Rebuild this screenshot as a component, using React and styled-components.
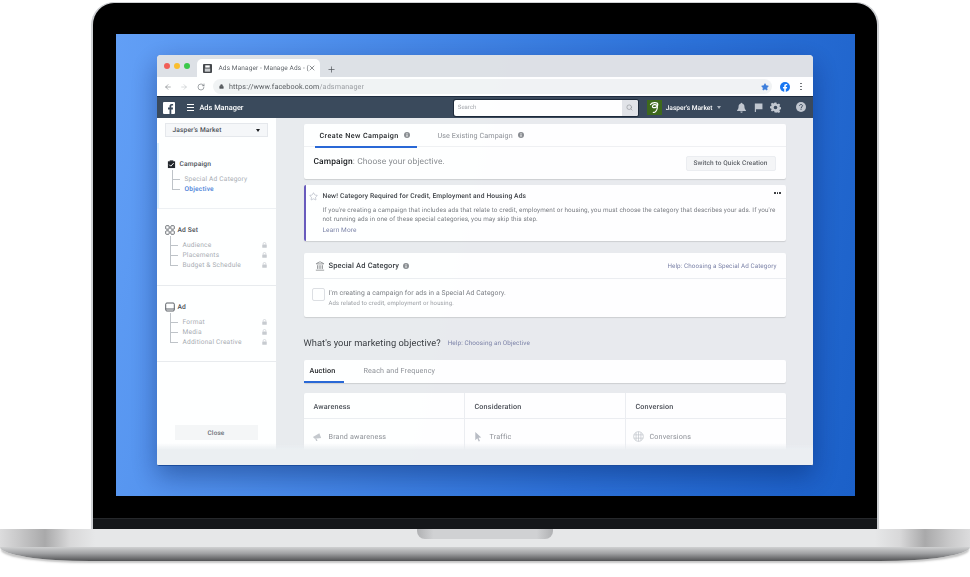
import React from 'react';
import styled, { createGlobalStyle } from 'styled-components';
import { ArrowLeft, ArrowRight, RotateCw, Lock, Star, X, Plus, Search, Landmark } from 'lucide-react';

const Global = createGlobalStyle`
  html, body { margin: 0; padding: 0; background: #fff; }
  body { width: 970px; height: 577px; overflow: hidden; font-family: Roboto, "Liberation Sans", Arial, sans-serif; text-rendering: geometricPrecision; }
  * { box-sizing: border-box; }
`;

const Page = styled.div`
  width: 970px; height: 577px; padding-top: 2px; background: #fff; display: flex; flex-direction: column; align-items: center;
`;
const Lid = styled.div`
  width: 788px; height: 527px; flex: none; display: flex; flex-direction: column; align-items: center;
  background: #000; border: solid #cfd1d4; border-width: 1px 2px 0; border-radius: 23px 23px 0 0; padding-top: 31px;
`;
const Screen = styled.div`
  width: 739px; height: 462px; flex: none; padding: 21px 0 0 41px;
  background: linear-gradient(103deg, #629ff6 0%, #4a8be9 30%, #2e73da 65%, #1b60c8 100%);
`;
const Hinge = styled.div`
  width: 100%; height: 11px; margin-top: 22px; background: #15171a; border-top: 1px solid #26282b;
`;
const Base = styled.div`
  width: 970px; height: 32px; flex: none; display: flex; flex-direction: column; align-items: center;
  border-radius: 0 0 90px 90px / 0 0 14px 14px; overflow: hidden;
  box-shadow: 0 3px 2px -1px rgba(90,90,90,.35);
`;
const BaseTop = styled.div`
  width: 100%; height: 18px; flex: none; display: flex; justify-content: center;
  background: linear-gradient(90deg, #dcdcdd 0, #c9c9ca 18px, #a9a9aa 45px, #d8d8d9 70px, #e6e7e8 95px, #e6e7e8 875px, #d8d8d9 900px, #a9a9aa 925px, #c9c9ca 950px, #dcdcdd 970px);
`;
const Notch = styled.div`
  width: 136px; height: 10px; border-radius: 0 0 8px 8px;
  background: linear-gradient(90deg, #b0b1b3, #d0d1d3 12%, #d0d1d3 88%, #b0b1b3);
`;
const BaseEdge = styled.div`
  width: 100%; flex: 1; background: linear-gradient(180deg, #cfd0d1 0%, #a2a3a5 45%, #515254 100%);
`;

const Window = styled.div`
  position: relative; width: 656px; height: 411px; border-radius: 4px 4px 2px 2px; overflow: hidden; display: flex; flex-direction: column;
  box-shadow: 0 10px 26px rgba(5,30,90,.42); background: #e9ebee; border-bottom: 1px solid #1c4d9e;
  filter: blur(.35px); opacity: .999; will-change: opacity;
`;
const TabStrip = styled.div`
  height: 22px; flex: none; background: #dee1e6; display: flex; align-items: flex-end; padding-left: 7px;
`;
const Dots = styled.div`
  display: flex; gap: 4px; align-self: flex-start; margin-top: 8px; width: 33px;
`;
const Dot = styled.span`
  width: 6px; height: 6px; border-radius: 50%; background: ${p => p.$c};
`;
const BrowserTab = styled.div`
  width: 123px; height: 18px; background: #fff; border-radius: 5px 5px 0 0; display: flex; align-items: center; padding: 0 4px 0 6px; gap: 4px;
  color: #5f6368;
`;
const Favicon = styled.span`
  width: 9px; height: 9px; flex: none; display: flex;
`;
const TabClose = styled.span`
  width: 8px; height: 8px; flex: none; display: flex;
`;
const TabTitle = styled.span`
  flex: 1; min-width: 0; padding-left: 3px; font-size: 6.5px; white-space: nowrap; color: #5f6368; letter-spacing: .12px;
`;
const NewTab = styled.span`
  margin: 0 0 3px 7px; display: flex; color: #4a4d52;
`;
const AddressRow = styled.div`
  height: 19px; flex: none; background: #fff; display: flex; align-items: center; padding: 0 8px 0 7px; color: #7b7f85;
`;
const Nav = styled.span`
  display: flex; width: 16.5px; color: ${p => p.$c || '#6a6e73'};
`;
const Omnibox = styled.div`
  width: 559px; height: 15px; background: #f1f3f4; border-radius: 8px; display: flex; align-items: center; padding: 0 3px 0 6px; gap: 5px; color: #55585c;
`;
const Url = styled.span`
  flex: 1; font-size: 7.2px; color: #9a9da1; letter-spacing: .15px;
  b { font-weight: 400; color: #55585c; }
`;
const FbRound = styled.span`
  margin-left: 8px; width: 10px; height: 10px; display: flex;
`;
const Kebab = styled.span`
  margin-left: 10px; display: flex; flex-direction: column; gap: 1.5px;
  i { width: 1.5px; height: 1.5px; border-radius: 50%; background: #5f6368; display: block; }
`;
const TopBar = styled.div`
  height: 22px; flex: none; background: #3b4a5c; border-top: 1px solid #1f2c3f; display: flex; align-items: center; padding: 0 6px;
`;
const FbLogo = styled.span`
  width: 12px; height: 12px; flex: none; display: flex;
`;
const Burger = styled.span`
  margin-left: 12px; width: 8px; display: flex; flex-direction: column; gap: 2px;
  i { height: 1px; background: #fff; display: block; }
`;
const Brand = styled.span`
  margin-left: 5px; color: #fff; font-size: 7.4px; font-weight: 500; width: 256px; white-space: nowrap;
`;
const SearchBox = styled.div`
  width: 185px; height: 16px; background: #fff; border-radius: 2px; display: flex; align-items: center; overflow: hidden; box-shadow: 0 0 0 1px #1e2a3a;
`;
const SearchText = styled.span`
  flex: 1; padding-left: 4px; font-size: 6px; color: #a5a8ad;
`;
const SearchBtn = styled.span`
  width: 16px; height: 100%; background: #e2e4e8; color: #8a8d91; display: flex; align-items: center; justify-content: center;
`;
const Avatar = styled.span`
  margin-left: 9px; width: 15px; height: 15px; display: flex; background: #3f6a1c;
`;
const AcctName = styled.span`
  margin-left: 4px; color: #fff; font-size: 6.6px; font-weight: 500; white-space: nowrap; width: 47px;
`;
const Caret = styled.span`
  width: 0; height: 0; border: solid transparent; border-width: 3px 2.5px 0; border-top-color: ${p => p.$c || '#aeb6c0'}; margin-left: ${p => p.$ml || 0}px;
`;
const BarIcon = styled.span`
  display: flex; margin-left: ${p => p.$ml}px; width: 11px; height: 11px; color: #c2c8d0;
`;
const Body = styled.div`
  flex: 1; display: flex; min-height: 0;
`;
const Sidebar = styled.aside`
  width: 119px; flex: none; background: #fff; display: flex; flex-direction: column;
`;
const AcctWrap = styled.div`
  height: 25px; flex: none; padding: 5px 8px 0;
`;
const AcctSelect = styled.div`
  height: 14px; background: #f6f7f9; border: 1px solid #e6e8ec; display: flex; align-items: center; justify-content: space-between; padding: 0 7px; color: #4b4f56; font-size: 6.6px; font-weight: 500; letter-spacing: .15px;
`;
const Section = styled.section`
  height: ${p => p.$h}px; flex: none; padding: 16px 0 0 ${p => p.$indent ? 10 : 8}px; border-bottom: 1px solid #e9ebee;
  ${p => p.$active && 'box-shadow: inset 2px 0 0 #dff1fe; border-bottom-color:#eef0f3;'}
`;
const SectionHead = styled.div`
  height: 10px; display: flex; align-items: center; gap: 3px; font-size: 6.7px; font-weight: 500; color: #4b4f56; letter-spacing: .15px;
`;
const HeadIcon = styled.span`
  width: 10px; height: 10px; display: flex; flex: none;
`;
const Tree = styled.div`
  margin: 1px 0 0 5px; padding-right: 9px;
`;
const Stem = styled.div`
  width: 1px; height: 4px; background: #bfc3c8;
`;
const TreeItem = styled.div`
  height: 10px; display: flex; align-items: center; font-size: 6.6px; letter-spacing: .2px; white-space: nowrap;
  color: ${p => p.$on ? '#4a80d8' : '#a9adb3'}; font-weight: ${p => p.$on ? 500 : 400};
`;
const Branch = styled.span`
  align-self: stretch; width: 10px; flex: none; margin-right: 3px;
  background:
    linear-gradient(#bfc3c8, #bfc3c8) left center / 8px 1px no-repeat,
    linear-gradient(#bfc3c8, #bfc3c8) left top / 1px ${p => p.$last ? '50%' : '100%'} no-repeat;
`;
const TreeLabel = styled.span`
  flex: 1;
`;
const LockMark = styled.span`
  display: flex; color: #c8cbd0;
`;
const CloseWrap = styled.div`
  margin-top: auto; padding: 0 18px 25px;
`;
const CloseBtn = styled.div`
  height: 15px; background: #f5f6f7; display: flex; align-items: center; justify-content: center; font-size: 6.4px; font-weight: 500; color: #6b6f76; letter-spacing: .15px;
`;
const Main = styled.main`
  flex: 1; min-width: 0; padding: 6px 27px 0 28px; overflow: hidden;
`;
const Card = styled.div`
  background: #fff; border-radius: 2px; box-shadow: 0 1px 1px rgba(0,0,0,.12); margin-top: ${p => p.$mt || 0}px; ${p => p.$h && `height:${p.$h}px;`}
`;
const TabsRow = styled.div`
  height: 23px; border-bottom: 1px solid #f0f1f3; display: flex; padding-left: 11px; gap: 16px;
`;
const CampaignTab = styled.div`
  width: ${p => p.$w}px; display: flex; align-items: center; gap: 5px; padding-left: 5px; font-size: 7.2px; white-space: nowrap;
  letter-spacing: ${p => p.$on ? '.4px' : '.08px'};
  font-weight: ${p => p.$on ? 500 : 400}; color: ${p => p.$on ? '#1c1e21' : '#8d9096'};
  border-bottom: 2px solid ${p => p.$on ? '#2a68d6' : 'transparent'}; height: 24px;
`;
const InfoMark = styled.span`
  display: flex; width: 6px; height: 6px; flex: none;
`;
const ObjectiveRow = styled.div`
  height: 32px; display: flex; align-items: center; justify-content: space-between; padding: 0 10px;
`;
const Objective = styled.span`
  margin-bottom: 3px; font-size: 8.4px; color: #8a8d91; letter-spacing: .15px; b { color: #1c1e21; font-weight: 500; }
`;
const QuickBtn = styled.span`
  width: 90px; height: 15px; background: #f5f6f7; border: 1px solid #eceef1; border-radius: 2px; display: flex; align-items: center; justify-content: center; font-size: 6.5px; font-weight: 500; color: #5f6368; letter-spacing: .12px;
`;
const Notice = styled(Card)`
  height: 56px; border-left: 2px solid #6a5bbd; padding: 7px 5px 0 3px; display: flex; gap: 5px;
`;
const NoticeBody = styled.div`
  flex: 1; min-width: 0;
`;
const NoticeHead = styled.div`
  display: flex; justify-content: space-between; font-size: 6.7px; font-weight: 500; color: #3d4045; line-height: 8px; letter-spacing: .14px;
`;
const More = styled.span`
  display: flex; gap: 1px;
  i { width: 1.5px; height: 1.5px; border-radius: 50%; background: #1c1e21; display: block; }
`;
const NoticeText = styled.p`
  margin: 6px 0 0; font-size: 6.35px; line-height: 8.5px; color: #7a7d82; white-space: nowrap; letter-spacing: .11px;
`;
const LearnMore = styled.a`
  display: block; margin-top: 3px; font-size: 6.5px; line-height: 9px; color: #7d84a8; letter-spacing: .12px;
`;
const CategoryHead = styled.div`
  height: 26px; border-bottom: 1px solid #eceef1; display: flex; align-items: center; padding: 0 9px 0 11px; gap: 4px; font-size: 7.5px; font-weight: 500; color: #3d4045; letter-spacing: .15px;
`;
const HelpLink = styled.a`
  font-size: ${p => p.$s || 6.3}px; font-weight: 400; color: #7d84a8; letter-spacing: .1px; ${p => p.$right && 'margin-left:auto;'} ${p => p.$ml && `margin-left:${p.$ml}px;`}
`;
const CheckRow = styled.div`
  display: flex; padding: 9px 8px 0; gap: 4px;
`;
const CheckBox = styled.span`
  width: 13px; height: 13px; flex: none; border: 1px solid #dddfe3; border-radius: 2px; background: #fff;
`;
const CheckTitle = styled.div`
  font-size: 6.8px; color: #7a7d82; line-height: 9px; margin-top: 1px; letter-spacing: .1px;
`;
const CheckSub = styled.div`
  font-size: 6px; color: #9a9da2; line-height: 8px; margin-top: 2px; letter-spacing: .1px;
`;
const Heading = styled.h2`
  margin: 19px 0 0; height: 14px; display: flex; align-items: center; font-size: 9.3px; font-weight: 400; color: #3d4045; letter-spacing: .05px; white-space: nowrap;
`;
const PlainTabs = styled(Card)`
  margin-top: 10px; height: 23px; display: flex; font-size: 7.2px; letter-spacing: .17px;
`;
const PlainTab = styled.span`
  width: ${p => p.$w}px; padding-left: ${p => p.$pl}px; display: flex; align-items: center; white-space: nowrap;
  font-weight: ${p => p.$on ? 500 : 400}; color: ${p => p.$on ? '#1c1e21' : '#8d9096'};
  border-bottom: 2px solid ${p => p.$on ? '#2a68d6' : 'transparent'};
`;
const Table = styled(Card)`
  margin-top: 10px; display: grid; grid-template-columns: 160px 161px 161px;
`;
const Col = styled.div`
  ${p => p.$border && 'border-left: 1px solid #eceef1;'}
`;
const ColHead = styled.div`
  height: 26px; border-bottom: 1px solid #eceef1; display: flex; align-items: center; padding: 1px 0 0 10px; font-size: 7.2px; font-weight: 500; color: #4b4f56; letter-spacing: .17px;
`;
const ColRow = styled.div`
  height: 34px; display: flex; align-items: center; padding-left: ${p => p.$pl}px; gap: ${p => p.$gap}px; font-size: 7.2px; color: #8d9096; letter-spacing: .17px;
`;
const ObjIcon = styled.span`
  width: 11px; height: 11px; display: flex; flex: none;
`;
const BottomFade = styled.div`
  position: absolute; left: 0; right: 0; bottom: 0; height: 22px; background: linear-gradient(180deg, rgba(236,239,242,0) 0, #ecEFF2 7px);
`;

const Info = ({ c = '#8a8d91' }) => (
  <InfoMark>
    <svg viewBox="0 0 12 12" width="6" height="6"><circle cx="6" cy="6" r="6" fill={c} /><rect x="5" y="5" width="2" height="4.5" fill="#fff" /><rect x="5" y="2.5" width="2" height="1.7" fill="#fff" /></svg>
  </InfoMark>
);
const PadLock = () => (
  <LockMark>
    <svg viewBox="0 0 10 12" width="5" height="6"><path d="M2.4 5V3.4a2.6 2.6 0 0 1 5.2 0V5" fill="none" stroke="currentColor" strokeWidth="1.3" /><rect x="0.5" y="5" width="9" height="6.5" rx="1" fill="currentColor" /></svg>
  </LockMark>
);
const Lines = ({ items, locked }) => (
  <Tree>
    <Stem />
    {items.map((t, i) => (
      <TreeItem key={t} $on={t === 'Objective'}>
        <Branch $last={i === items.length - 1} />
        <TreeLabel>{t}</TreeLabel>
        {locked && <PadLock />}
      </TreeItem>
    ))}
  </Tree>
);

export default function App() {
  return (
    <Page>
      <Global />
      <Lid>
        <Screen>
          <Window>
            <TabStrip>
              <Dots>
                <Dot $c="#f25f58" /><Dot $c="#fbbe2e" /><Dot $c="#3cc84a" />
              </Dots>
              <BrowserTab>
                <Favicon><svg viewBox="0 0 10 10" width="9" height="9"><rect width="10" height="10" rx="1" fill="#45484c" /><rect x="2.5" y="1.5" width="5" height="2.5" fill="#fff" /><rect x="2" y="5" width="6" height="3.5" fill="#c9cbce" /></svg></Favicon>
                <TabTitle>Ads Manager - Manage Ads - (</TabTitle>
                <TabClose><X size={8} strokeWidth={2} color="#55585c" /></TabClose>
              </BrowserTab>
              <NewTab><Plus size={9} strokeWidth={1.8} /></NewTab>
            </TabStrip>
            <AddressRow>
              <Nav><ArrowLeft size={8} strokeWidth={1.6} /></Nav>
              <Nav $c="#b9bcc0"><ArrowRight size={8} strokeWidth={1.6} /></Nav>
              <Nav><RotateCw size={8} strokeWidth={1.8} /></Nav>
              <Omnibox>
                <Lock size={5} fill="currentColor" strokeWidth={2} />
                <Url><b>https://www.facebook.com</b>/adsmanager</Url>
                <Star size={8} fill="#3d7fdc" color="#3d7fdc" />
              </Omnibox>
              <FbRound>
                <svg viewBox="0 0 20 20" width="10" height="10"><circle cx="10" cy="10" r="10" fill="#1877f2" /><path d="M13.9 12.9l.45-2.9H11.6V8.1c0-.8.4-1.6 1.6-1.6h1.25V4.05S13.3 3.85 12.2 3.85c-2.3 0-3.75 1.4-3.75 3.9V10H5.9v2.9h2.55V20h3.15v-7.1z" fill="#fff" /></svg>
              </FbRound>
              <Kebab><i /><i /><i /></Kebab>
            </AddressRow>
            <TopBar>
              <FbLogo>
                <svg viewBox="0 0 12 12" width="12" height="12"><rect width="12" height="12" rx="1" fill="#fff" /><path d="M8.3 12V7.4h1.5l.25-1.8H8.3V4.5c0-.5.15-.9.9-.9h.9V2c-.2 0-.7-.07-1.3-.07-1.35 0-2.25.8-2.25 2.3V5.6H5v1.8h1.55V12z" fill="#3b4a5c" /></svg>
              </FbLogo>
              <Burger><i /><i /><i /></Burger>
              <Brand>Ads Manager</Brand>
              <SearchBox>
                <SearchText>Search</SearchText>
                <SearchBtn><Search size={7} strokeWidth={2} /></SearchBtn>
              </SearchBox>
              <Avatar>
                <svg viewBox="0 0 15 15" width="15" height="15"><path d="M3.5 4.5C5 2.2 10.5 1.8 10.8 4.4c.2 2-2.6 3.7-4.5 3.2C4.7 7 5.5 4.8 7.5 4.6c2-.2 3.3.8 2.8 3.4-.4 2.5-2.4 5-4 4.4" fill="none" stroke="#fff" strokeWidth="1.2" strokeLinecap="round" /></svg>
              </Avatar>
              <AcctName>Jasper's Market</AcctName>
              <Caret $ml={4} />
              <BarIcon $ml={15}>
                <svg viewBox="0 0 12 12" width="11" height="11"><path d="M6 .7c-.5 0-.8.3-.8.8C3.5 2 2.8 3.3 2.8 5c0 2.6-1 3.3-1.6 4v.8h9.6V9c-.6-.7-1.6-1.4-1.6-4 0-1.7-.7-3-2.4-3.5 0-.5-.3-.8-.8-.8zM4.7 10.3a1.3 1.3 0 0 0 2.6 0z" fill="currentColor" /></svg>
              </BarIcon>
              <BarIcon $ml={6}>
                <svg viewBox="0 0 12 12" width="11" height="11"><path d="M2 1.5h8.3v6.3H3.2V11H2z" fill="currentColor" /></svg>
              </BarIcon>
              <BarIcon $ml={6}>
                <svg viewBox="0 0 12 12" width="11" height="11"><path fillRule="evenodd" d="M5 .5h2l.3 1.5 1.1.5 1.3-.8 1.4 1.4-.8 1.3.5 1.1 1.5.3v2l-1.5.3-.5 1.1.8 1.3-1.4 1.4-1.3-.8-1.1.5L7 11.5H5l-.3-1.5-1.1-.5-1.3.8L.9 9.4l.8-1.3L1.2 7 0 6.7v-2l1.2-.2.5-1.1-.8-1.3 1.4-1.4 1.3.8 1.1-.5zM6 4a2 2 0 1 0 0 4 2 2 0 0 0 0-4z" fill="currentColor" /></svg>
              </BarIcon>
              <BarIcon $ml={15}>
                <svg viewBox="0 0 12 12" width="10" height="10"><circle cx="6" cy="6" r="6" fill="currentColor" /><path d="M4.2 4.6c0-1 .8-1.6 1.8-1.6s1.8.6 1.8 1.5c0 1.3-1.7 1.3-1.7 2.7" fill="none" stroke="#3b4a5c" strokeWidth="1.2" /><rect x="5.4" y="8" width="1.3" height="1.3" fill="#3b4a5c" /></svg>
              </BarIcon>
            </TopBar>
            <Body>
              <Sidebar>
                <AcctWrap>
                  <AcctSelect>Jasper's Market<Caret $c="#1c1e21" /></AcctSelect>
                </AcctWrap>
                <Section $h={66} $indent $active>
                  <SectionHead>
                    <HeadIcon><svg viewBox="0 0 10 10" width="9" height="10"><path d="M1 2h8v7.5H1z" fill="#23262b" /><path d="M2.6 5.8l1.6 1.6 3.2-3.4" fill="none" stroke="#fff" strokeWidth="1.1" /><rect x="3" y="1" width="4" height="1.6" fill="#23262b" /></svg></HeadIcon>
                    Campaign
                  </SectionHead>
                  <Lines items={['Special Ad Category', 'Objective']} />
                </Section>
                <Section $h={77}>
                  <SectionHead>
                    <HeadIcon><svg viewBox="0 0 10 10" width="10" height="10" fill="none" stroke="#4b4f56" strokeWidth=".8"><rect x=".7" y=".7" width="3.5" height="3.5" rx=".8" /><rect x="5.8" y=".7" width="3.5" height="3.5" rx=".8" /><rect x=".7" y="5.8" width="3.5" height="3.5" rx=".8" /><rect x="5.8" y="5.8" width="3.5" height="3.5" rx=".8" /></svg></HeadIcon>
                    Ad Set
                  </SectionHead>
                  <Lines items={['Audience', 'Placements', 'Budget & Schedule']} locked />
                </Section>
                <Section $h={76}>
                  <SectionHead>
                    <HeadIcon><svg viewBox="0 0 10 10" width="10" height="10" fill="none" stroke="#4b4f56" strokeWidth=".9"><rect x=".7" y="1" width="8.6" height="8" rx="1.2" /><path d="M.7 7h8.6" /></svg></HeadIcon>
                    Ad
                  </SectionHead>
                  <Lines items={['Format', 'Media', 'Additional Creative']} locked />
                </Section>
                <CloseWrap><CloseBtn>Close</CloseBtn></CloseWrap>
              </Sidebar>
              <Main>
                <Card>
                  <TabsRow>
                    <CampaignTab $w={102} $on>Create New Campaign <Info /></CampaignTab>
                    <CampaignTab $w={100}>Use Existing Campaign <Info /></CampaignTab>
                  </TabsRow>
                  <ObjectiveRow>
                    <Objective><b>Campaign</b>: Choose your objective.</Objective>
                    <QuickBtn>Switch to Quick Creation</QuickBtn>
                  </ObjectiveRow>
                </Card>
                <Notice $mt={6}>
                  <Star size={9} color="#8f96a8" strokeWidth={1.2} />
                  <NoticeBody>
                    <NoticeHead>New! Category Required for Credit, Employment and Housing Ads<More><i /><i /><i /></More></NoticeHead>
                    <NoticeText>If you're creating a campaign that includes ads that relate to credit, employment or housing, you must choose the category that describes your ads. If you're<br />not running ads in one of these special categories, you may skip this step.</NoticeText>
                    <LearnMore>Learn More</LearnMore>
                  </NoticeBody>
                </Notice>
                <Card $mt={12} $h={64}>
                  <CategoryHead>
                    <Landmark size={10} color="#55585c" strokeWidth={1.4} />
                    <span>Special Ad Category</span><Info />
                    <HelpLink $right>Help: Choosing a Special Ad Category</HelpLink>
                  </CategoryHead>
                  <CheckRow>
                    <CheckBox />
                    <div>
                      <CheckTitle>I'm creating a campaign for ads in a Special Ad Category.</CheckTitle>
                      <CheckSub>Ads related to credit, employment or housing.</CheckSub>
                    </div>
                  </CheckRow>
                </Card>
                <Heading>What's your marketing objective?<HelpLink $ml={7} $s={6.4}>Help: Choosing an Objective</HelpLink></Heading>
                <PlainTabs>
                  <PlainTab $w={40} $pl={6} $on>Auction</PlainTab>
                  <PlainTab $w={120} $pl={20}>Reach and Frequency</PlainTab>
                </PlainTabs>
                <Table>
                  <Col>
                    <ColHead>Awareness</ColHead>
                    <ColRow $pl={8} $gap={6}>
                      <ObjIcon><svg viewBox="0 0 12 12" width="11" height="11"><path d="M1 6.5l7-4 2 5-7 1zM3.5 8.5l1 2.5h1.5l-1-3z" fill="#c6c9ce" /></svg></ObjIcon>
                      Brand awareness
                    </ColRow>
                  </Col>
                  <Col $border>
                    <ColHead>Consideration</ColHead>
                    <ColRow $pl={8} $gap={6}>
                      <ObjIcon><svg viewBox="0 0 12 12" width="11" height="11"><path d="M2.5 1l6.5 6-3 .4 1.6 3.4-1.4.6-1.5-3.4L2.5 10z" fill="#b9bdc4" /></svg></ObjIcon>
                      Traffic
                    </ColRow>
                  </Col>
                  <Col $border>
                    <ColHead>Conversion</ColHead>
                    <ColRow $pl={7} $gap={6}>
                      <ObjIcon><svg viewBox="0 0 12 12" width="11" height="11" fill="none" stroke="#bcc0c7" strokeWidth=".7"><circle cx="6" cy="6" r="5.3" /><path d="M1 4.2h10M1 7.8h10M6 .7v10.6M3.4 1.5v9M8.6 1.5v9" /></svg></ObjIcon>
                      Conversions
                    </ColRow>
                  </Col>
                </Table>
              </Main>
            </Body>
            <BottomFade />
          </Window>
        </Screen>
        <Hinge />
      </Lid>
      <Base>
        <BaseTop><Notch /></BaseTop>
        <BaseEdge />
      </Base>
    </Page>
  );
}
